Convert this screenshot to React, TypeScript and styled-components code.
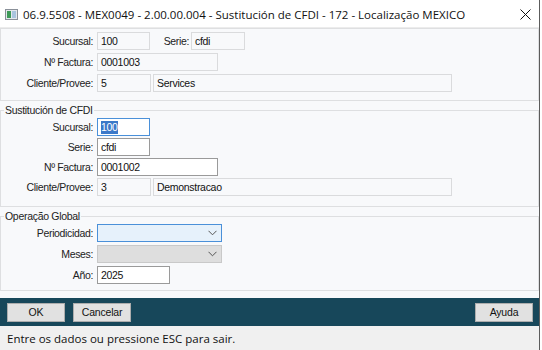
import styled, {createGlobalStyle} from "styled-components";

const GlobalStyle = createGlobalStyle`
    * {
        box-sizing: border-box;
    }

    body {
        margin: 0;
        background: #fff;
        font-family: "Liberation Sans", Arial, sans-serif;
    }
`;

const Screen = styled.div`
    display: flex;
    width: 542px;
    height: 350px;
    overflow: hidden;
    background: #fff;
`;

const Window = styled.div`
    width: 540px;
    height: 350px;
    display: flex;
    flex-direction: column;
    border-right: 1px solid #5c5c5c;
    background: #f8f9fb;
`;

const TitleBar = styled.div`
    height: 28px;
    flex-shrink: 0;
    display: flex;
    align-items: center;
    padding: 2px 8px 0 5px;
    gap: 5px;
    background: #fff;
    border-bottom: 1px solid #ececec;
`;

const Title = styled.div`
    flex: 1;
    font-family: "Open Sans", "Liberation Sans", sans-serif;
    font-size: 11.5px;
    color: #111;
    white-space: nowrap;
`;

const Panel = styled.div`
    height: 73px;
    flex-shrink: 0;
    border: 1px solid #dedfe1;
    padding: 3px 0 0;
    display: flex;
    flex-direction: column;
    gap: 3px;
`;

// caixa de grupo com legenda, como no Protheus
const Group = styled.fieldset<{ $bottom: number; $gap: number }>`
    margin: 3px 0 0;
    padding: 1px 0 ${p => p.$bottom}px;
    border: 1px solid #dedfe1;
    display: flex;
    flex-direction: column;
    gap: ${p => p.$gap}px;
    min-width: 0;
    flex-shrink: 0;

    legend {
        margin-left: 3px;
        padding: 0 1px;
        font-size: 10.5px;
        letter-spacing: -0.3px;
        line-height: 13px;
        color: #222;
    }
`;

const Row = styled.div`
    display: flex;
    align-items: center;
    height: 18px;
`;

const Label = styled.div<{ $width?: number }>`
    width: ${p => p.$width ?? 92}px;
    margin-right: ${p => (p.$width ? 2 : 4)}px;
    text-align: right;
    font-size: 10.5px;
    letter-spacing: -0.35px;
    color: #222;
    white-space: nowrap;
`;

const Field = styled.div<{ $width: number; $kind?: "ro" | "edit" | "focus" }>`
    width: ${p => p.$width}px;
    height: 18px;
    margin-right: 2px;
    padding-left: 3px;
    display: flex;
    align-items: center;
    font-size: 10.5px;
    letter-spacing: -0.3px;
    color: #111;
    background: ${p => (p.$kind === "ro" ? "#f8f9fb" : "#fff")};
    border: 1px solid ${p =>
        p.$kind === "focus" ? "#4a90d9" : p.$kind === "edit" ? "#9a9a9a" : "#dadbdd"};
`;

const Selected = styled.span`
    background: #3b78c8;
    color: #fff;
    line-height: 13px;
`;

const Combo = styled.div<{ $disabled?: boolean }>`
    width: 125px;
    height: 18px;
    display: flex;
    align-items: center;
    justify-content: flex-end;
    padding-right: 4px;
    background: ${p => (p.$disabled ? "#dedede" : "#e6f1fb")};
    border: 1px solid ${p => (p.$disabled ? "#c9c9c9" : "#4a90d9")};
`;

const Spacer = styled.div`
    height: 7px;
    flex-shrink: 0;
`;

const ButtonBar = styled.div`
    height: 28px;
    flex-shrink: 0;
    display: flex;
    align-items: center;
    gap: 8px;
    padding: 0 6px 0 7px;
    background: #17475a;
`;

const Button = styled.button`
    width: 58px;
    height: 19px;
    padding: 0;
    font-family: "Liberation Sans", Arial, sans-serif;
    font-size: 10.5px;
    letter-spacing: -0.2px;
    color: #111;
    background: #e1e1e1;
    border: 1px solid #adadad;
    border-radius: 0;
`;

const Push = styled.div`
    flex: 1;
`;

const StatusBar = styled.div`
    flex: 1;
    display: flex;
    align-items: center;
    padding-left: 7px;
    background: #f0f0f0;
    font-family: "Open Sans", "Liberation Sans", sans-serif;
    font-size: 11.5px;
    color: #111;
`;

function Chevron() {
  return (
    <svg width="9" height="6" viewBox="0 0 9 6">
      <polyline points="0.5,0.8 4.5,4.8 8.5,0.8" fill="none" stroke="#555" strokeWidth="1" />
    </svg>
  );
}

function AppIcon() {
  return (
    <svg width="13" height="11" viewBox="0 0 13 11">
      <rect x="0.5" y="0.5" width="12" height="10" fill="#e4e8ec" stroke="#8a9099" />
      <rect x="2" y="2" width="4" height="7" fill="#3e9a58" />
      <rect x="7" y="2" width="4" height="7" fill="#a9c4de" />
    </svg>
  );
}

function CloseIcon() {
  return (
    <svg width="11" height="11" viewBox="0 0 11 11">
      <path d="M0.5 0.5 L10.5 10.5 M10.5 0.5 L0.5 10.5" stroke="#111" strokeWidth="1" />
    </svg>
  );
}

export default function App() {
  return (
    <Screen>
      <GlobalStyle />
      <Window>
        <TitleBar>
          <AppIcon />
          <Title>06.9.5508 - MEX0049 - 2.00.00.004 - Sustitución de CFDI - 172 - Localização MEXICO</Title>
          <CloseIcon />
        </TitleBar>

        <Panel>
          <Row>
            <Label>Sucursal:</Label>
            <Field $width={53} $kind="ro">100</Field>
            <Label $width={37}>Serie:</Label>
            <Field $width={54} $kind="ro">cfdi</Field>
          </Row>
          <Row>
            <Label>Nº Factura:</Label>
            <Field $width={121} $kind="ro">0001003</Field>
          </Row>
          <Row>
            <Label>Cliente/Provee:</Label>
            <Field $width={54} $kind="ro">5</Field>
            <Field $width={299} $kind="ro">Services</Field>
          </Row>
        </Panel>

        <Group $bottom={10} $gap={2}>
          <legend>Sustitución de CFDI</legend>
          <Row>
            <Label>Sucursal:</Label>
            <Field $width={53} $kind="focus"><Selected>100</Selected></Field>
          </Row>
          <Row>
            <Label>Serie:</Label>
            <Field $width={53} $kind="edit">cfdi</Field>
          </Row>
          <Row>
            <Label>Nº Factura:</Label>
            <Field $width={121} $kind="edit">0001002</Field>
          </Row>
          <Row>
            <Label>Cliente/Provee:</Label>
            <Field $width={54} $kind="ro">3</Field>
            <Field $width={299} $kind="ro">Demonstracao</Field>
          </Row>
        </Group>

        <Group $bottom={6} $gap={3}>
          <legend>Operação Global</legend>
          <Row>
            <Label>Periodicidad:</Label>
            <Combo><Chevron /></Combo>
          </Row>
          <Row>
            <Label>Meses:</Label>
            <Combo $disabled><Chevron /></Combo>
          </Row>
          <Row>
            <Label>Año:</Label>
            <Field $width={73} $kind="edit">2025</Field>
          </Row>
        </Group>

        <Spacer />

        <ButtonBar>
          <Button>OK</Button>
          <Button>Cancelar</Button>
          <Push />
          <Button>Ayuda</Button>
        </ButtonBar>

        <StatusBar>Entre os dados ou pressione ESC para sair.</StatusBar>
      </Window>
    </Screen>
  );
}
